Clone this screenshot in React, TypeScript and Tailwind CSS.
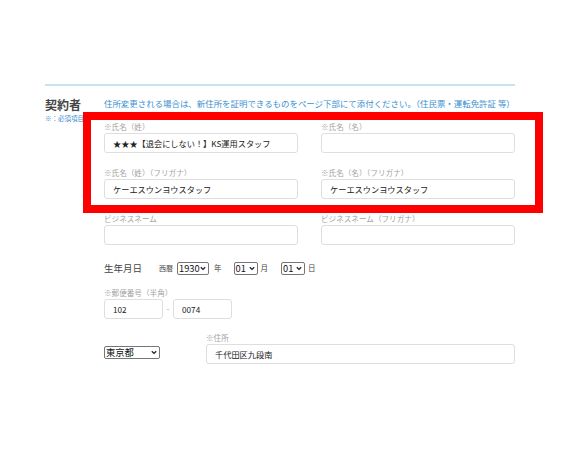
import React from "react";

const jp = { fontFamily: '"Noto Sans CJK JP", "Noto Sans", sans-serif' };

function Chevron() {
  return (
    <svg width="6" height="5" viewBox="0 0 6 5" className="shrink-0">
      <polyline points="0.8,1.2 3,3.4 5.2,1.2" fill="none" stroke="#222" strokeWidth="1.3" />
    </svg>
  );
}

function Field({ label, value, width = "w-[194px]" }: { label: string; value?: string; width?: string }) {
  return (
    <div className={`flex flex-col ${width}`}>
      <div className="h-[12px] text-[7.6px] leading-[12px] text-[#a3a3a3]">{label}</div>
      <div className="h-[20px] rounded-[3px] border border-[#dedede] bg-white px-[8px] text-[8.2px] leading-[18px] text-[#222]">
        {value}
      </div>
    </div>
  );
}

function NativeSelect({ value, width }: { value: string; width: string }) {
  return (
    <div
      className={`flex h-[13px] items-center justify-between rounded-[2px] border border-[#767676] bg-white pl-[1px] pr-[2px] text-[9.3px] leading-[11px] text-[#111] ${width}`}
    >
      <span>{value}</span>
      <Chevron />
    </div>
  );
}

export default function App() {
  return (
    <div className="relative h-[454px] w-[567px] overflow-hidden bg-white" style={jp}>
      <div className="pl-[45px] pt-[84px]">
        <div className="h-[2px] w-[470px] bg-[#c7e3f2]" />
        <div className="flex">
          <div className="w-[59px] shrink-0 pt-[12px]">
            <div className="text-[12px] font-bold leading-[14px] text-[#444]">契約者</div>
            <div className="mt-[2px] whitespace-nowrap text-[6.5px] leading-[9px] text-[#3c8fd0]">※：必須項目</div>
          </div>
          <div className="w-[411px] pt-[11px]">
            <div className="whitespace-nowrap text-[8.45px] leading-[12px] text-[#3c8fd0]">
              住所変更される場合は、新住所を証明できるものをページ下部にて添付ください。（住民票・運転免許証 等）
            </div>
            <div className="mt-[12px] grid grid-cols-[194px_194px] gap-x-[23px] gap-y-[14px]">
              <Field label="※氏名（姓）" value="★★★【退会にしない！】KS運用スタッフ" />
              <Field label="※氏名（名）" />
              <Field label="※氏名（姓）（フリガナ）" value="ケーエスウンヨウスタッフ" />
              <Field label="※氏名（名）（フリガナ）" value="ケーエスウンヨウスタッフ" />
              <Field label="ビジネスネーム" />
              <Field label="ビジネスネーム（フリガナ）" />
            </div>
            <div className="mt-[16px] flex h-[14px] items-center text-[#444]">
              <span className="text-[9.5px]">生年月日</span>
              <span className="ml-[17px] text-[7px]">西暦</span>
              <div className="ml-[4px]">
                <NativeSelect value="1930" width="w-[32px]" />
              </div>
              <span className="ml-[5px] text-[7.5px]">年</span>
              <div className="ml-[12px]">
                <NativeSelect value="01" width="w-[24px]" />
              </div>
              <span className="ml-[3px] text-[7.5px]">月</span>
              <div className="ml-[13px]">
                <NativeSelect value="01" width="w-[24px]" />
              </div>
              <span className="ml-[3px] text-[7.5px]">日</span>
            </div>
            <div className="mt-[12px] flex flex-col">
              <div className="h-[12px] text-[7.6px] leading-[12px] text-[#a3a3a3]">※郵便番号（半角）</div>
              <div className="flex items-center">
                <div className="h-[20px] w-[59px] rounded-[3px] border border-[#dedede] px-[8px] text-[8.2px] leading-[18px] text-[#222]">
                  102
                </div>
                <span className="w-[10px] text-center text-[8px] text-[#999]">-</span>
                <div className="h-[20px] w-[59px] rounded-[3px] border border-[#dedede] px-[8px] text-[8.2px] leading-[18px] text-[#222]">
                  0074
                </div>
              </div>
            </div>
            <div className="mt-[13px] flex items-end">
              <div className="mb-[5px] w-[102px]">
                <NativeSelect value="東京都" width="w-[56px]" />
              </div>
              <Field label="※住所" value="千代田区九段南" width="w-[309px]" />
            </div>
          </div>
        </div>
      </div>
      <div className="absolute left-[83px] top-[112px] h-[101px] w-[460px] border-[8px] border-[#ff0000]" />
    </div>
  );
}
